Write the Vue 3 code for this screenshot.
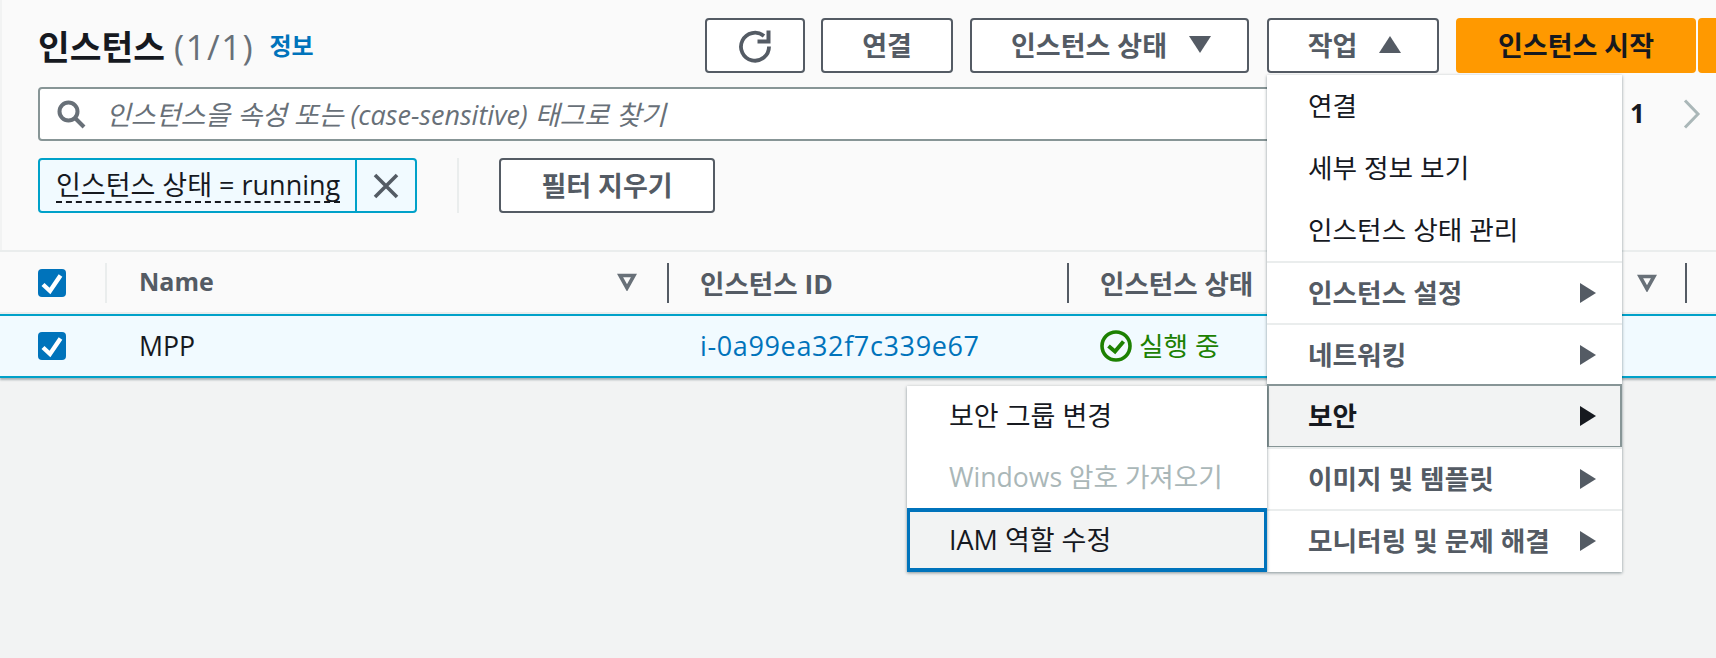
<script setup>
const mainItems = [
  { label: '연결' },
  { label: '세부 정보 보기' },
  { label: '인스턴스 상태 관리' },
]
const groupItems = [
  { label: '인스턴스 설정' },
  { label: '네트워킹' },
  { label: '보안', active: true },
  { label: '이미지 및 템플릿' },
  { label: '모니터링 및 문제 해결' },
]
</script>

<template>
  <div class="page">
    <section class="top">
      <header class="head">
        <h1 class="title">인스턴스 <span class="count">(1/1)</span></h1>
        <a class="info">정보</a>
        <div class="actions">
          <button class="btn refresh" aria-label="새로 고침">
            <svg width="34" height="34" viewBox="0 0 34 34" fill="none" stroke="#545b64" stroke-width="3.8">
              <path d="M26 7A14 14 0 1 0 31 17.5" />
              <path d="M30.5 1.5V12.5H19.5" stroke-width="4" />
            </svg>
          </button>
          <button class="btn connect">연결</button>
          <button class="btn state">인스턴스 상태<i class="tri down"></i></button>
          <button class="btn act">작업<i class="tri up"></i></button>
          <button class="btn primary start">인스턴스 시작</button>
          <button class="btn primary more"></button>
        </div>
      </header>

      <div class="search-row">
        <div class="search">
          <svg class="mag" width="30" height="30" viewBox="0 0 30 30" fill="none" stroke="#687078">
            <circle cx="12.5" cy="12.5" r="9" stroke-width="4" />
            <path d="M19 19l9 9" stroke-width="4" />
          </svg>
          <span class="ph">인스턴스을 속성 또는 (case-sensitive) 태그로 찾기</span>
        </div>
        <div class="pager">
          <span class="num">1</span>
          <svg width="18" height="30" viewBox="0 0 18 30" fill="none" stroke="#aab7b8" stroke-width="3">
            <path d="M2 1.5l13 13.5L2 28.5" />
          </svg>
        </div>
      </div>

      <div class="filter-row">
        <div class="chip">
          <span class="chip-text"><span class="dash">인스턴스 상태 = running</span></span>
          <span class="chip-x">
            <svg width="26" height="26" viewBox="0 0 26 26" fill="none" stroke="#545b64" stroke-width="3.6">
              <path d="M2 2l22 22M24 2L2 24" />
            </svg>
          </span>
        </div>
        <span class="sep"></span>
        <button class="btn clear">필터 지우기</button>
      </div>
    </section>

    <section class="table">
      <div class="row thead">
        <div class="cell c-check">
          <span class="check"><svg width="28" height="28" viewBox="0 0 28 28" fill="none" stroke="#fff" stroke-width="4.4"><path d="M5 15.5l7 6.5L22.5 6.5" /></svg></span>
          <span class="soft-rule"></span>
        </div>
        <div class="cell c-name">
          <span class="th name">Name</span>
          <svg class="sort" width="20" height="18" viewBox="0 0 20 18" fill="none" stroke="#687078" stroke-width="3.6"><path d="M3 2.5h14l-7 12.5z" /></svg>
        </div>
        <div class="cell c-id"><span class="th">인스턴스 ID</span></div>
        <div class="cell c-state"><span class="th">인스턴스 상태</span></div>
        <div class="cell c-end">
          <svg class="sort" width="20" height="18" viewBox="0 0 20 18" fill="none" stroke="#687078" stroke-width="3.6"><path d="M3 2.5h14l-7 12.5z" /></svg>
        </div>
      </div>
      <div class="row tbody">
        <div class="cell c-check">
          <span class="check"><svg width="28" height="28" viewBox="0 0 28 28" fill="none" stroke="#fff" stroke-width="4.4"><path d="M5 15.5l7 6.5L22.5 6.5" /></svg></span>
        </div>
        <div class="cell c-name">MPP</div>
        <div class="cell c-id"><a class="link">i-0a99ea32f7c339e67</a></div>
        <div class="cell c-state running">
          <svg width="32" height="32" viewBox="0 0 32 32" fill="none" stroke="#1d8102" stroke-width="3.6">
            <circle cx="16" cy="16" r="14" />
            <path d="M8.5 16l6.5 5.5 8.5-10" stroke-width="4" />
          </svg>
          <span>실행 중</span>
        </div>
      </div>
    </section>

    <nav class="menu">
      <ul class="list plain">
        <li v-for="m in mainItems" :key="m.label" class="item">{{ m.label }}</li>
      </ul>
      <ul class="list">
        <li v-for="g in groupItems" :key="g.label" class="item group" :class="{ active: g.active }">
          <span>{{ g.label }}</span>
          <i class="arrow"></i>
        </li>
      </ul>
    </nav>

    <nav class="submenu">
      <div class="sub-item">보안 그룹 변경</div>
      <div class="sub-item disabled">Windows 암호 가져오기</div>
      <div class="sub-item focus">IAM 역할 수정</div>
    </nav>
  </div>
</template>

<style>
html, body { margin: 0; overflow: hidden; }
</style>

<style scoped>
.page {
  position: relative;
  width: 1716px;
  height: 658px;
  overflow: hidden;
  background: #f2f3f3;
  color: #16191f;
  font-family: "Open Sans", "Noto Sans CJK KR", sans-serif;
  font-size: 26.7px;
}
.top {
  background: #fafafa;
  padding: 18px 0 0 38px;
  height: 250px;
  box-sizing: border-box;
  border-left: 2px solid #f2f3f3;
}
.head { display: flex; align-items: center; height: 55px; margin-left: -2px; padding-bottom: 2px; box-sizing: border-box; }
.title { margin: 0; font-size: 34.5px; font-weight: 700; }
.count { font-weight: 400; color: #687078; letter-spacing: 1.6px; }
.info { color: #0073bb; font-size: 24px; font-weight: 700; margin-left: 15px; }
.actions { display: flex; position: absolute; left: 705px; top: 18px; }
.btn {
  box-sizing: border-box;
  height: 55px;
  border: 2px solid #545b64;
  border-radius: 4px;
  background: #fff;
  color: #545b64;
  font: 700 27px "Open Sans", "Noto Sans CJK KR", sans-serif;
  padding: 0 0 3px;
  display: flex;
  align-items: center;
  justify-content: center;
}
.refresh { width: 100px; margin-right: 16px; padding: 0; }
.connect { width: 132px; margin-right: 17px; }
.state { width: 279px; margin-right: 18px; padding-left: 3px; }
.act { width: 172px; margin-right: 17px; padding-left: 3px; }
.primary { background: #ff9900; border-color: #ff9900; color: #16191f; }
.start { width: 240px; margin-right: 2px; }
.more { width: 60px; }
.tri { display: block; width: 0; height: 0; margin-left: 22px; border-left: 11px solid transparent; border-right: 11px solid transparent; }
.tri.down { border-top: 17px solid #545b64; }
.tri.up { border-bottom: 17px solid #545b64; }

.search-row { display: flex; align-items: center; margin: 14px 0 0 -2px; height: 54px; }
.search {
  box-sizing: border-box;
  width: 1250px;
  height: 54px;
  display: flex;
  align-items: center;
  padding-left: 16px;
  background: #fff;
  border: 2px solid #879596;
  border-radius: 4px;
}
.mag { flex: none; }
.ph { margin-left: 20px; font-style: italic; font-size: 27px; color: #687078; padding-bottom: 2px; }
.pager { display: flex; align-items: center; margin-left: 342px; }
.num { font-weight: 700; font-size: 26px; margin-right: 38px; padding-bottom: 2px; }

.filter-row { display: flex; align-items: stretch; margin: 17px 0 0 -2px; height: 55px; }
.chip {
  box-sizing: border-box;
  width: 379px;
  display: flex;
  background: #f1faff;
  border: 2px solid #00a1c9;
  border-radius: 4px;
}
.chip-text { flex: 1; display: flex; align-items: center; padding-left: 16px; font-size: 27px; }
.dash { border-bottom: 2px dashed #16191f; line-height: 32px; white-space: nowrap; }
.chip-x { flex: none; width: 58px; display: flex; align-items: center; justify-content: center; border-left: 2px solid #00a1c9; }
.sep { width: 2px; background: #eaeded; margin: 0 40px 0 40px; }
.clear { width: 216px; }

.table { display: flex; flex-direction: column; border-top: 2px solid #eaeded; }
.row { display: flex; align-items: center; }
.thead { height: 62px; background: #fafafa; }
.tbody {
  box-sizing: border-box;
  height: 64px;
  background: #f1faff;
  border-top: 2px solid #00a1c9;
  border-bottom: 2px solid #00a1c9;
  box-shadow: 0 -2px 0 #eaeded, 0 2px 2px rgba(0, 28, 36, 0.3);
}
.cell { box-sizing: border-box; display: flex; align-items: center; height: 40px; }
.c-check { width: 139px; padding-left: 38px; position: relative; }
.check {
  width: 28px;
  height: 28px;
  border-radius: 4px;
  background: #0073bb;
  display: flex;
  align-items: center;
  justify-content: center;
}
.soft-rule { position: absolute; left: 105px; top: 0; width: 2px; height: 40px; background: #eaeded; }
.c-name { width: 528px; justify-content: space-between; padding-right: 30px; padding-bottom: 2px; }
.c-id { width: 400px; border-left: 2px solid #545b64; padding-left: 31px; }
.tbody .c-id, .tbody .c-state { border-left: 2px solid transparent; }
.c-state { width: 560px; border-left: 2px solid #545b64; padding-left: 31px; }
.c-end { flex: none; width: 60px; justify-content: flex-end; }
.thead .c-end { border-right: 2px solid #545b64; padding-right: 28px; }
.th { font-weight: 700; color: #545b64; font-size: 26.5px; padding-bottom: 2px; }
.th.name { font-size: 25px; }
.link { color: #0073bb; font-size: 27px; letter-spacing: 0.63px; padding-bottom: 2px; }
.running { color: #1d8102; gap: 7px; }
.running span { padding-bottom: 3px; }

.menu {
  position: absolute;
  left: 1267px;
  top: 75px;
  width: 355px;
  padding-bottom: 1px;
  background: #fff;
  box-shadow: 0 1px 3px rgba(0, 28, 36, 0.45);
}
.list { list-style: none; margin: 0; padding: 0; }
.item {
  box-sizing: border-box;
  height: 62px;
  display: flex;
  align-items: center;
  padding: 0 0 4px 41px;
}
.group {
  justify-content: space-between;
  padding-right: 26px;
  border-top: 2px solid #eaeded;
  font-weight: 700;
  color: #545b64;
}
.arrow { display: block; width: 0; height: 0; margin-top: 4px; border-top: 10px solid transparent; border-bottom: 10px solid transparent; border-left: 16px solid #545b64; }
.active {
  background: #f2f3f3;
  border: 2px solid #879596;
  color: #16191f;
  padding-left: 39px;
  padding-right: 24px;
  height: 64px;
  margin: -1px 0;
}
.active .arrow { border-left-color: #16191f; }
.submenu {
  position: absolute;
  left: 907px;
  top: 386px;
  width: 360px;
  background: #fff;
  box-shadow: 0 1px 3px rgba(0, 28, 36, 0.45);
}
.sub-item { box-sizing: border-box; height: 61px; display: flex; align-items: center; padding: 0 0 4px 42px; font-size: 27px; }
.disabled { color: #aab7b8; font-size: 26.6px; }
.focus { height: 64px; background: #f2f3f3; border-style: solid; border-color: #0073bb; border-width: 4px 3px; padding-left: 39px; }
</style>
